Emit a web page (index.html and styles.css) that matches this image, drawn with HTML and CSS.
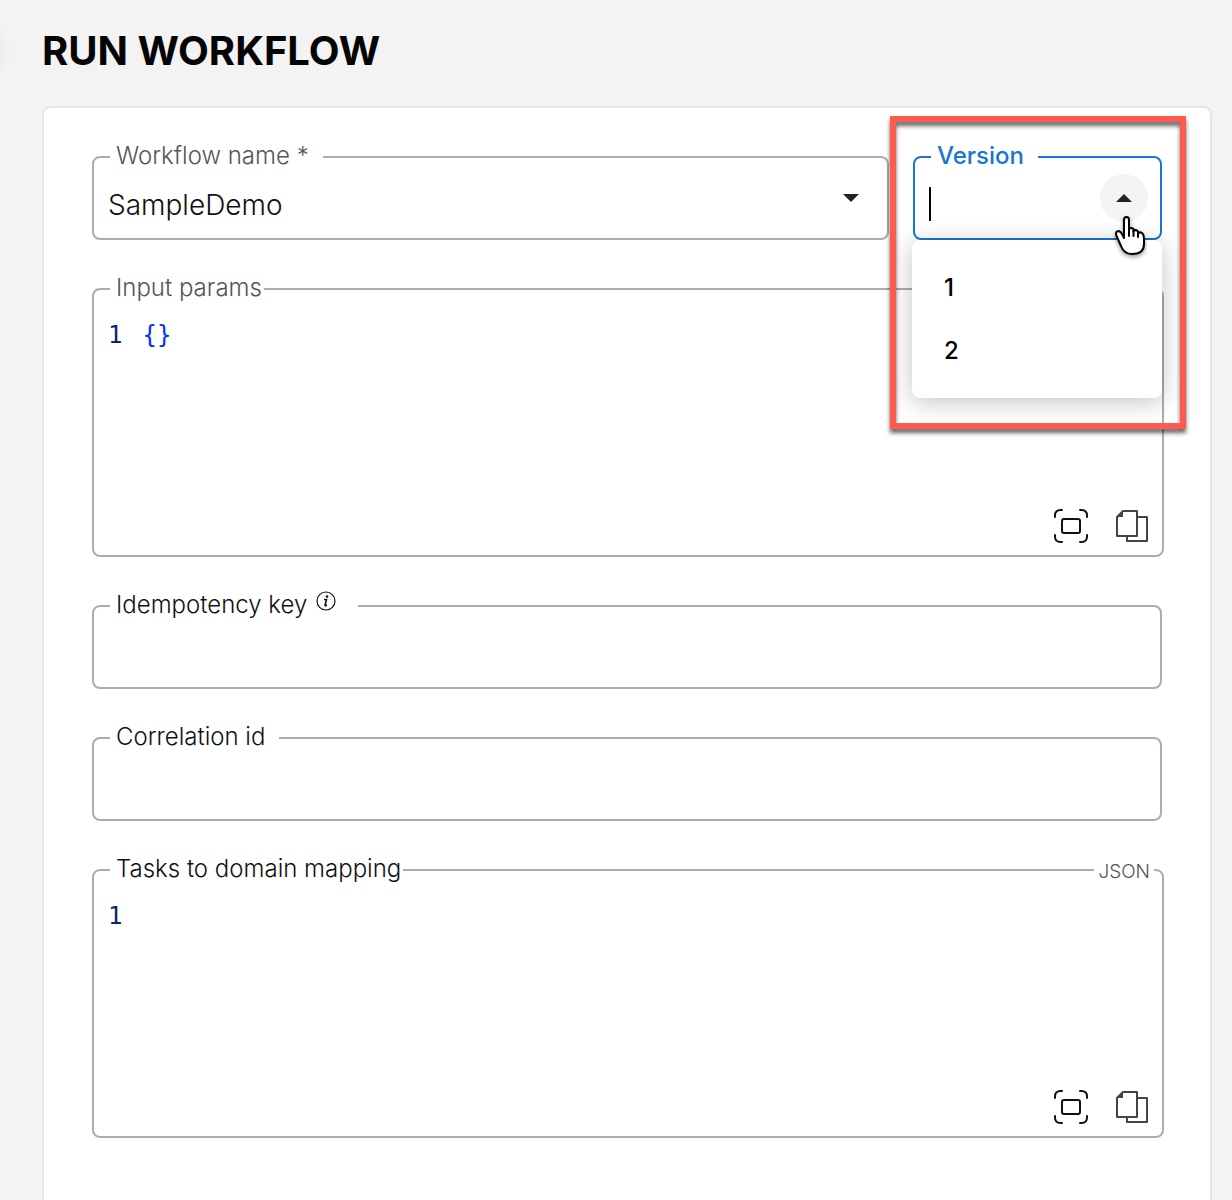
FILE: index.html
```html
<!DOCTYPE html>
<html lang="en">
<head>
  <meta charset="utf-8">
  <meta name="viewport" content="width=device-width, initial-scale=1">
  <title>Run Workflow</title>
  <link rel="stylesheet" href="styles.css">
</head>
<body>
  <svg class="sprite" aria-hidden="true">
    <symbol id="icon-expand" viewBox="0 0 34 34">
      <g fill="none" stroke="#111" stroke-width="2" stroke-linecap="round">
        <path d="M1 8V6.500Q1 1 6.500 1H8M26 1h1.500Q33 1 33 6.500V8M33 26v1.500Q33 33 27.500 33H26M8 33H6.500Q1 33 1 27.500V26"/>
        <rect x="8" y="10" width="18" height="14" rx="2"/>
      </g>
    </symbol>
    <symbol id="icon-copy" viewBox="0 0 34 34">
      <path d="M8 2h14v25H2V8zM22 8h10v24H12v-5" fill="none" stroke="#444" stroke-width="2" stroke-linejoin="round"/>
      <path d="M8 2v6H2z" fill="#444"/>
    </symbol>
  </svg>

  <main class="page">
    <h1 class="title">RUN WORKFLOW</h1>

    <form class="card">
      <div class="row">
        <fieldset class="field">
          <legend class="legend legend-muted"><label for="name">Workflow name *</label></legend>
          <div class="control">
            <input class="input" id="name" type="text" value="SampleDemo">
            <button class="toggle" type="button" aria-label="Open workflow list">
              <svg width="16" height="8" viewBox="0 0 16 8"><path d="M0 0h16L8 8z" fill="#222"/></svg>
            </button>
          </div>
        </fieldset>

        <div class="version">
          <fieldset class="field field-active">
            <legend class="legend legend-active"><label for="version">Version</label></legend>
            <div class="control">
              <span class="caret"></span>
              <input class="input" id="version" type="text" role="combobox" aria-expanded="true" aria-controls="versions">
              <button class="toggle toggle-hover" type="button" aria-label="Close version list">
                <svg width="16" height="8" viewBox="0 0 16 8"><path d="M0 8h16L8 0z" fill="#222"/></svg>
              </button>
            </div>
          </fieldset>
          <ul class="menu" id="versions" role="listbox">
            <li class="option" role="option">1</li>
            <li class="option" role="option">2</li>
          </ul>
          <div class="highlight"></div>
          <svg class="pointer" width="34" height="44" viewBox="0 0 34 44" aria-hidden="true">
            <path d="M10 24V6Q10 3 12.500 3T15 6V15Q17 13 19.500 15V17Q22 15 24 17.500V19Q27 17.500 28.500 19.500Q30 21 30 25V30Q30 40 18 40Q10 40 7 32L3 23Q1 19 3 17.500Q6 16 8 20Z" fill="#fff" stroke="#000" stroke-width="2" stroke-linejoin="round"/>
            <path d="M15 14v8M19.500 16v6M24 18v5" fill="none" stroke="#000" stroke-width="2" stroke-linecap="round"/>
          </svg>
        </div>
      </div>

      <fieldset class="field editor">
        <legend class="legend legend-muted legend-tight"><label for="params">Input params</label></legend>
        <div class="editor-body">
          <div class="code">
            <span class="line-number">1</span>
            <textarea class="code-text" id="params" rows="1" spellcheck="false">{}</textarea>
          </div>
          <div class="tools">
            <button class="tool" type="button" aria-label="Expand"><svg width="34" height="34"><use href="#icon-expand"/></svg></button>
            <button class="tool" type="button" aria-label="Copy"><svg width="34" height="34"><use href="#icon-copy"/></svg></button>
          </div>
        </div>
      </fieldset>

      <fieldset class="field">
        <legend class="legend legend-info">
          <label for="idempotency">Idempotency key</label>
          <svg class="info" width="20" height="20" viewBox="0 0 20 20" aria-hidden="true">
            <circle cx="10" cy="10" r="9" fill="none" stroke="#111" stroke-width="1.200"/>
            <path d="M8 8.500h2.500L9 14.500q.3.600 2-.600" fill="none" stroke="#111" stroke-width="1.600"/>
            <circle cx="11" cy="5.500" r="1.300" fill="#111"/>
          </svg>
        </legend>
        <div class="control"><input class="input" id="idempotency" type="text"></div>
      </fieldset>

      <fieldset class="field">
        <legend class="legend"><label for="correlation">Correlation id</label></legend>
        <div class="control"><input class="input" id="correlation" type="text"></div>
      </fieldset>

      <fieldset class="field editor">
        <legend class="legend legend-tight"><label for="mapping">Tasks to domain mapping</label></legend>
        <span class="format">JSON</span>
        <div class="editor-body">
          <div class="code">
            <span class="line-number">1</span>
            <textarea class="code-text" id="mapping" rows="1" spellcheck="false"></textarea>
          </div>
          <div class="tools">
            <button class="tool" type="button" aria-label="Expand"><svg width="34" height="34"><use href="#icon-expand"/></svg></button>
            <button class="tool" type="button" aria-label="Copy"><svg width="34" height="34"><use href="#icon-copy"/></svg></button>
          </div>
        </div>
      </fieldset>
    </form>
  </main>
</body>
</html>
```
FILE: styles.css
```css
* {
  box-sizing: border-box;
}

body {
  margin: 0;
  background: #f3f3f3 radial-gradient(circle at -18px 50px, #e8e8e8 12px, #f3f3f3 30px) no-repeat;
  color: #111;
  font-family: Inter, "Liberation Sans", sans-serif;
  font-weight: 300;
}

.sprite {
  position: absolute;
  width: 0;
  height: 0;
}

.page {
  display: flex;
  flex-direction: column;
  min-height: 100vh;
  padding: 27px 20px 0 42px;
}

.title {
  margin: 0 0 31px;
  color: #050505;
  font-size: 40px;
  font-weight: 700;
  line-height: 48px;
}

.card {
  display: flex;
  flex: 1;
  flex-direction: column;
  gap: 34px;
  padding: 34px 48px 48px;
  border: 2px solid #e6e6e6;
  border-bottom: 0;
  border-radius: 8px 8px 0 0;
  background: #fff;
}

.row {
  display: grid;
  grid-template-columns: minmax(0, 1fr) 249px;
  gap: 24px;
}

.field {
  min-width: 0;
  margin: 0;
  padding: 0 12px 0 16px;
  border: 2px solid #adadad;
  border-radius: 8px;
}

.field-active {
  border-color: #1976d2;
}

.legend {
  height: 30px;
  padding: 0 14px 0 6px;
  font-size: 24px;
  line-height: 28px;
  white-space: nowrap;
}

.legend-muted {
  color: #555;
}

.legend-active {
  color: #1976d2;
  font-weight: 500;
}

.legend-tight {
  padding-right: 2px;
}

.legend-info {
  padding-right: 22px;
}

.info {
  margin-left: 2px;
  vertical-align: 2px;
}

.control {
  display: flex;
  align-items: flex-start;
  height: 66px;
  margin-left: -2px;
}

.input {
  flex: 1;
  min-width: 0;
  height: 66px;
  padding: 0;
  border: 0;
  outline: 0;
  background: transparent;
  color: #111;
  font: inherit;
  font-size: 28px;
}

.caret {
  width: 2px;
  height: 34px;
  margin-top: 15px;
  background: #000;
}

.toggle {
  display: flex;
  align-items: center;
  justify-content: center;
  width: 48px;
  height: 48px;
  margin-top: 2px;
  padding: 0;
  border: 0;
  border-radius: 50%;
  background: transparent;
}

.toggle-hover {
  background: #f4f4f4;
}

.version {
  position: relative;
  z-index: 1;
}

.menu {
  position: absolute;
  top: 98px;
  left: -1px;
  right: 0;
  margin: 0;
  padding: 16px 0;
  border-radius: 8px;
  background: #fff;
  box-shadow: 0 4px 24px rgba(0, 0, 0, 0.24);
  list-style: none;
}

.option {
  padding: 0 32px;
  color: #000;
  font-size: 24px;
  font-weight: 500;
  line-height: 63px;
}

.highlight {
  position: absolute;
  top: -26px;
  left: -23px;
  right: -24px;
  height: 313px;
  border: 6px solid #ff5a4d;
  filter: drop-shadow(0 4px 2px rgba(0, 0, 0, 0.6));
  pointer-events: none;
}

.pointer {
  position: absolute;
  top: 72px;
  right: 14px;
  filter: drop-shadow(0 2px 2px rgba(0, 0, 0, 0.4));
  pointer-events: none;
}

.editor {
  position: relative;
  margin-right: -2px;
  padding: 0 13px 0 16px;
}

.editor-body {
  display: flex;
  flex-direction: column;
  justify-content: space-between;
  height: 251px;
  margin-left: -2px;
  padding: 13px 0 12px;
}

.code {
  display: flex;
  gap: 20px;
  font-family: "DejaVu Sans Mono", monospace;
  font-size: 24px;
  font-weight: 400;
  line-height: 36px;
}

.line-number {
  color: #0b216f;
}

.code-text {
  flex: 1;
  height: 36px;
  padding: 0;
  border: 0;
  outline: 0;
  resize: none;
  overflow: hidden;
  background: transparent;
  color: #0431fa;
  font: inherit;
}

.tools {
  display: flex;
  justify-content: flex-end;
  gap: 27px;
}

.tool {
  display: flex;
  padding: 0;
  border: 0;
  background: transparent;
}

.format {
  position: absolute;
  top: -28px;
  right: 8px;
  padding: 0 4px;
  background: #fff;
  color: #555;
  font-size: 19px;
  line-height: 30px;
}
```
